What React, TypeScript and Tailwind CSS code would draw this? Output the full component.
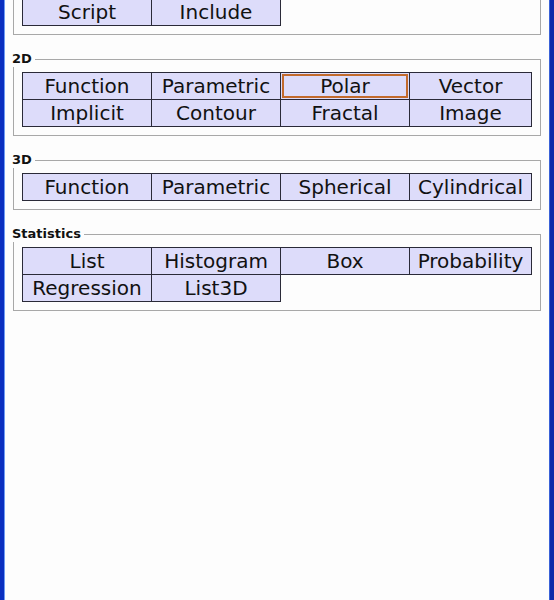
import React from 'react';

type Section = {
  title?: string;
  rows: string[][];
};

const sections: Section[] = [
  { rows: [['Script', 'Include']] },
  {
    title: '2D',
    rows: [
      ['Function', 'Parametric', 'Polar', 'Vector'],
      ['Implicit', 'Contour', 'Fractal', 'Image'],
    ],
  },
  { title: '3D', rows: [['Function', 'Parametric', 'Spherical', 'Cylindrical']] },
  {
    title: 'Statistics',
    rows: [
      ['List', 'Histogram', 'Box', 'Probability'],
      ['Regression', 'List3D'],
    ],
  },
];

const focused = '2D:Polar';

function PlotTable({ section }: { section: Section }) {
  return (
    <table className="w-[509px] table-fixed border-collapse">
      <colgroup>
        <col className="w-[129px]" />
        <col className="w-[129px]" />
        <col className="w-[129px]" />
        <col className="w-[122px]" />
      </colgroup>
      <tbody>
        {section.rows.map((row, i) => (
          <tr key={i} className="h-[27px]">
            {row.map((label) => (
              <td
                key={label}
                className="relative border border-[#2a2a38] bg-[#dddcfa] p-0 text-center text-[20px] leading-[25px] text-[#111]"
              >
                {`${section.title}:${label}` === focused && (
                  <span className="absolute inset-[1px] border-2 border-[#c26a2c]" />
                )}
                {label}
              </td>
            ))}
          </tr>
        ))}
      </tbody>
    </table>
  );
}

export default function App() {
  return (
    <div className="flex h-[600px] w-[554px] overflow-hidden bg-white font-['DejaVu_Sans',sans-serif]">
      <div className="w-[4px] bg-[#0a2fc0]" />
      <div className="w-px bg-[#6d9cf5]" />
      <div className="flex-1 bg-[#fdfdfd]">
        {sections.map((section, idx) =>
          section.title ? (
            <fieldset
              key={idx}
              className="mt-4 ml-[8px] w-[528px] border border-[#a8a8a8] px-2 pt-[5px] pb-2"
            >
              <legend className="-ml-[10px] pr-[3px] text-[13px] leading-4 font-bold text-[#111]">
                {section.title}
              </legend>
              <PlotTable section={section} />
            </fieldset>
          ) : (
            <div
              key={idx}
              className="-mt-[2px] ml-[8px] w-[528px] border border-t-0 border-[#a8a8a8] px-2 pb-2"
            >
              <PlotTable section={section} />
            </div>
          )
        )}
      </div>
      <div className="w-px bg-[#3b62d8]" />
      <div className="w-[4px] bg-[#0c2aa8]" />
    </div>
  );
}
